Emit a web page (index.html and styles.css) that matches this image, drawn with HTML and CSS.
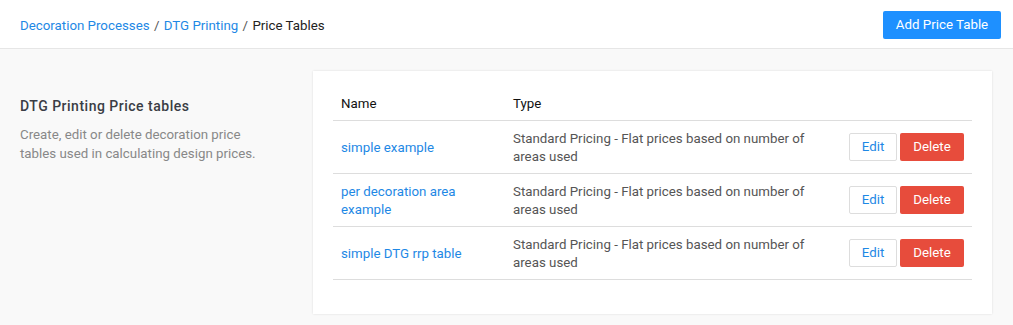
FILE: index.html
```html
<!DOCTYPE html>
<html lang="en">
<head>
    <meta charset="UTF-8">
    <title>Price Tables</title>
    <link rel="stylesheet" href="styles.css">
</head>
<body>
    <header class="topbar">
        <div class="crumbs">
            <a href="#">Decoration Processes</a>
            <span class="sep">/</span>
            <a href="#">DTG Printing</a>
            <span class="sep">/</span>
            <span class="current">Price Tables</span>
        </div>
        <button class="btn btn-primary">Add Price Table</button>
    </header>

    <div class="main">
        <div class="intro">
            <h2>DTG Printing Price tables</h2>
            <p>Create, edit or delete decoration price tables used in calculating design prices.</p>
        </div>

        <div class="card">
            <table class="prices">
                <thead>
                    <tr>
                        <th class="col-name">Name</th>
                        <th class="col-type">Type</th>
                        <th></th>
                    </tr>
                </thead>
                <tbody>
                    <tr>
                        <td><a href="#">simple example</a></td>
                        <td>Standard Pricing - Flat prices based on number of areas used</td>
                        <td class="actions">
                            <button class="btn btn-edit">Edit</button><button class="btn btn-delete">Delete</button>
                        </td>
                    </tr>
                    <tr>
                        <td><a href="#">per decoration area example</a></td>
                        <td>Standard Pricing - Flat prices based on number of areas used</td>
                        <td class="actions">
                            <button class="btn btn-edit">Edit</button><button class="btn btn-delete">Delete</button>
                        </td>
                    </tr>
                    <tr>
                        <td><a href="#">simple DTG rrp table</a></td>
                        <td>Standard Pricing - Flat prices based on number of areas used</td>
                        <td class="actions">
                            <button class="btn btn-edit">Edit</button><button class="btn btn-delete">Delete</button>
                        </td>
                    </tr>
                </tbody>
            </table>
        </div>
    </div>
</body>
</html>
```

FILE: styles.css
```css
body {
    font-family: Roboto, "Liberation Sans", sans-serif;
    font-size: 13.3px;
    margin: 0;
    padding: 0;
    background-color: #f9f9f9;
    color: #333;
    height: 325px;
}
a {
    color: #1e88e5;
    text-decoration: none;
}
.topbar {
    display: flex;
    justify-content: space-between;
    align-items: center;
    height: 48px;
    padding: 0 12px 0 20px;
    background-color: #fff;
    border-bottom: 1px solid #e6e6e6;
}
.crumbs {
    line-height: 18px;
    margin-top: 3px;
}
.crumbs .sep {
    color: #555;
    margin: 0 1px;
}
.crumbs .current {
    color: #222;
}
.btn {
    font-family: inherit;
    font-size: 13.3px;
    border: 1px solid transparent;
    border-radius: 2px;
    cursor: pointer;
    height: 28px;
    line-height: 26px;
    padding: 0 12px;
}
.btn-primary {
    background-color: #1e90ff;
    color: #fff;
    width: 118px;
    padding: 0;
    margin-top: 1px;
}
.main {
    display: grid;
    grid-template-columns: 273px 1fr;
    gap: 20px;
    padding: 22px 21px 0 20px;
    align-items: start;
}
.intro {
    padding-top: 26px;
}
.intro h2 {
    margin: 0;
    font-size: 14px;
    line-height: 18px;
    font-weight: 500;
    letter-spacing: 0.5px;
    color: #3a3d45;
}
.intro p {
    margin: 10px 0 0;
    color: #888;
    line-height: 19px;
    padding-right: 20px;
}
.card {
    background-color: #fff;
    padding: 20px 20px 34px;
    box-shadow: 0 0 2px rgba(0, 0, 0, 0.12);
}
.prices {
    width: 100%;
    border-collapse: collapse;
}
.prices th {
    font-weight: 400;
    text-align: left;
    color: #111;
    padding: 4px 8px 7px;
    line-height: 18px;
    border-bottom: 1px solid #dddddd;
}
.prices td {
    padding: 9px 8px 7px;
    line-height: 18px;
    color: #555;
    border-bottom: 1px solid #dddddd;
    height: 36px;
}
.col-name {
    width: 156px;
}
.col-type {
    width: 320px;
}
.prices .actions {
    text-align: right;
    white-space: nowrap;
    padding-top: 8px;
    padding-bottom: 8px;
}
.btn-edit {
    background-color: #fff;
    border-color: #ddd;
    color: #1e88e5;
    width: 48px;
    padding: 0;
    margin-right: 3px;
}
.btn-delete {
    background-color: #e74c3c;
    color: #fff;
    width: 64px;
    padding: 0;
}
```
